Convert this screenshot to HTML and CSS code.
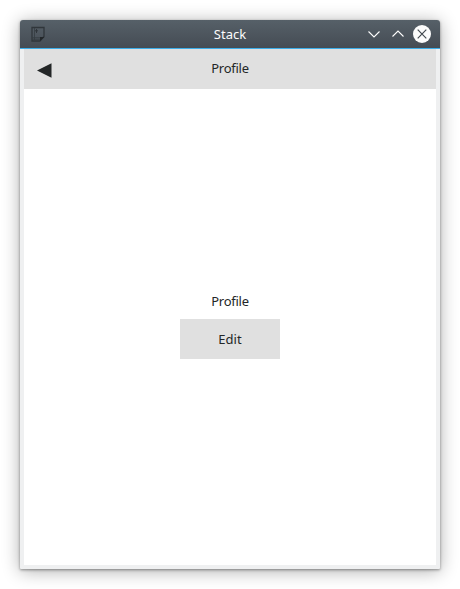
FILE: index.html
```html
<!DOCTYPE html>
<html lang="en">
<head>
<meta charset="utf-8">
<title>Stack</title>
<link rel="stylesheet" href="styles.css">
</head>
<body>
<div class="window">
  <header class="titlebar">
    <svg class="app-icon" width="16" height="16" viewBox="0 0 16 16">
      <path d="M2 1.500h12v9l-4 4.500H2z" fill="none" stroke="#30363b" stroke-width="1.300"/>
      <path d="M4.500 2v12M2 11.700h8M2 13.300h8" fill="none" stroke="#353c41" stroke-width=".8"/>
      <path d="M10 15v-4h4.500z" fill="#23272a"/>
      <path d="M6.500 3v4M5 4.800h3" stroke="#30363b" stroke-width="1"/>
    </svg>
    <span class="title">Stack</span>
    <div class="controls">
      <svg width="18" height="18" viewBox="0 0 18 18"><path d="M3.500 6.500 9 12l5.500-5.500" fill="none" stroke="#fcfcfc" stroke-width="1.100"/></svg>
      <svg width="18" height="18" viewBox="0 0 18 18"><path d="M3.500 11.500 9 6l5.500 5.500" fill="none" stroke="#fcfcfc" stroke-width="1.100"/></svg>
      <svg width="18" height="18" viewBox="0 0 18 18"><circle cx="9" cy="9" r="9" fill="#fcfcfc"/><path d="m4.700 4.700 8.600 8.600m0-8.600-8.600 8.600" stroke="#434a50" stroke-width="1.200"/></svg>
    </div>
  </header>
  <main class="client">
    <nav class="toolbar">
      <svg class="back" width="15" height="15" viewBox="0 0 15 15"><path d="M0 7.500 14.500.200v14.600z" fill="#232627"/></svg>
      <span class="label">Profile</span>
    </nav>
    <section class="page">
      <span class="label">Profile</span>
      <button class="edit">Edit</button>
    </section>
  </main>
</div>
</body>
</html>
```
FILE: styles.css
```css
body {
  margin: 0;
  padding: 20px;
  background: #fff;
  color: #232627;
  font: 13px/18px "Noto Sans", sans-serif;
}

.window {
  height: 549px;
  display: flex;
  flex-direction: column;
  background: #eff0f1;
  border-radius: 3px 3px 1px 1px;
  overflow: hidden;
  box-shadow: 0 1px 3px rgba(0, 0, 0, .4), 0 2px 18px rgba(0, 0, 0, .32);
}

.titlebar {
  box-sizing: border-box;
  height: 29px;
  display: grid;
  grid-template-columns: 1fr auto 1fr;
  align-items: center;
  padding: 0 9px 0 10px;
  background: linear-gradient(#566068, #454c54);
  border-bottom: 1px solid #3daee9;
  color: #fcfcfc;
}

.title {
  margin-right: 1px;
}

.controls {
  display: flex;
  justify-content: flex-end;
  gap: 6px;
}

.client {
  flex: 1;
  display: flex;
  flex-direction: column;
  margin: 0 4px 4px;
  background: #fff;
}

.toolbar {
  height: 40px;
  display: grid;
  grid-template-columns: 1fr auto 1fr;
  align-items: center;
  background: #e0e0e0;
}

.back {
  margin: 2px 0 0 13px;
}

.label {
  letter-spacing: -.25px;
}

.toolbar .label {
  padding-bottom: 2px;
}

.page {
  flex: 1;
  display: flex;
  flex-direction: column;
  align-items: center;
  justify-content: center;
  gap: 9px;
  padding-bottom: 4px;
}

.edit {
  width: 100px;
  height: 40px;
  padding: 0;
  border: 0;
  background: #e0e0e0;
  color: inherit;
  font: inherit;
}
```
